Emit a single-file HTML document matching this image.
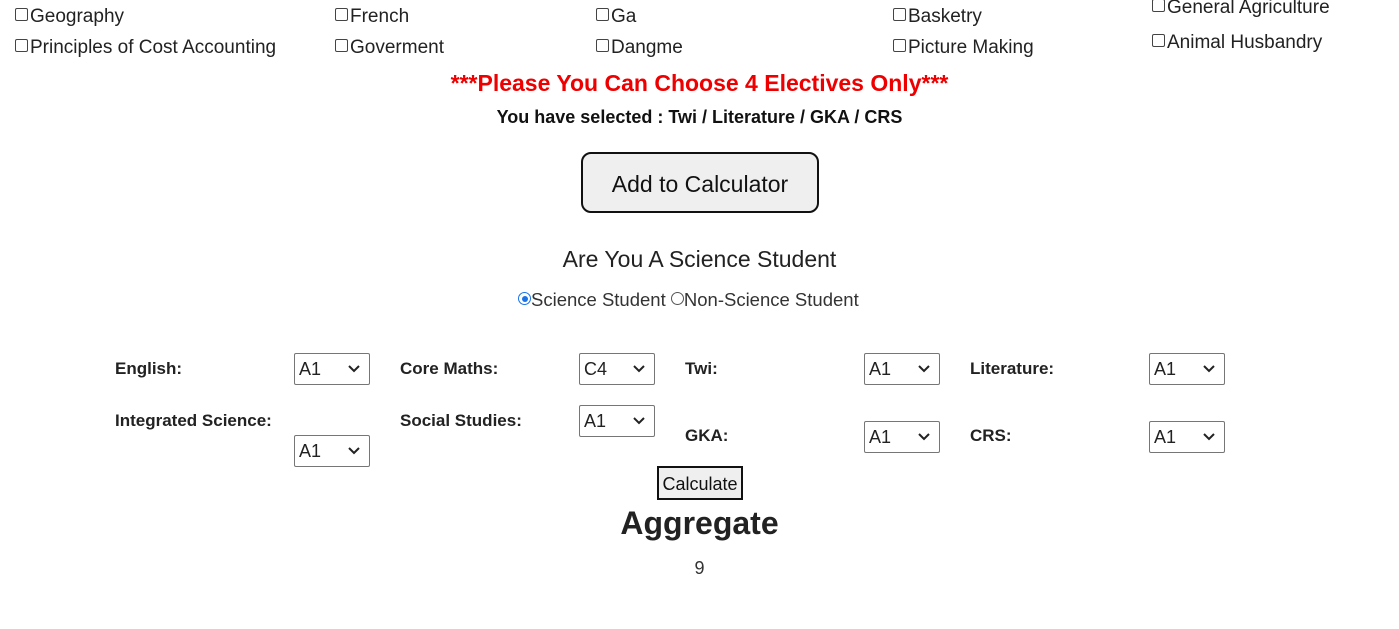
<!DOCTYPE html>
<html><head><meta charset="utf-8"><style>
body{margin:0;width:1399px;height:629px;background:#fff;font-family:"Liberation Sans",sans-serif;color:#222;position:relative;overflow:hidden}
.a{position:absolute;white-space:nowrap}
.cb{font-size:19px;line-height:20px}
.cb i{display:inline-block;width:13px;height:13px;border:1px solid #444;border-radius:2px;margin-right:2px;vertical-align:1px;box-sizing:border-box}
.lb{font-size:17px;font-weight:bold;color:#222}
.sel{position:absolute;width:76px;height:32px;border:1px solid #767676;border-radius:2px;box-sizing:border-box;font-size:18px;line-height:30px;padding-left:4px;background:#fff}
.sel svg{position:absolute;right:9px;top:11px}
</style></head><body>
<div class="a cb" style="left:15px;top:7px"><i></i>Geography</div>
<div class="a cb" style="left:15px;top:38px"><i></i>Principles of Cost Accounting</div>
<div class="a cb" style="left:335px;top:7px"><i></i>French</div>
<div class="a cb" style="left:335px;top:38px"><i></i>Goverment</div>
<div class="a cb" style="left:596px;top:7px"><i></i>Ga</div>
<div class="a cb" style="left:596px;top:38px"><i></i>Dangme</div>
<div class="a cb" style="left:893px;top:7px"><i></i>Basketry</div>
<div class="a cb" style="left:893px;top:38px"><i></i>Picture Making</div>
<div class="a cb" style="left:1152px;top:-2px"><i></i>General Agriculture</div>
<div class="a cb" style="left:1152px;top:33px"><i></i>Animal Husbandry</div>

<div class="a" style="left:0;width:1399px;text-align:center;top:70px;font-size:23px;font-weight:bold;color:#e00">***Please You Can Choose 4 Electives Only***</div>
<div class="a" style="left:0;width:1399px;text-align:center;top:107px;font-size:18px;font-weight:bold;color:#111">You have selected : Twi / Literature / GKA / CRS</div>

<div class="a" style="left:581px;top:152px;width:238px;height:61px;border:2px solid #111;border-radius:10px;box-sizing:border-box;background:#efefef;font-size:23px;line-height:60px;text-align:center;color:#111">Add to Calculator</div>

<div class="a" style="left:0;width:1399px;text-align:center;top:246px;font-size:23px;color:#222">Are You A Science Student</div>
<div class="a" style="left:518px;top:289px;font-size:18.5px;color:#333">
<span style="display:inline-block;width:13px;height:13px;border-radius:50%;border:1px solid #1a73e8;box-sizing:border-box;position:relative;vertical-align:1px"><span style="position:absolute;left:2.5px;top:2.5px;width:6px;height:6px;border-radius:50%;background:#1a73e8"></span></span>Science Student <span style="display:inline-block;width:13px;height:13px;border-radius:50%;border:1px solid #555;box-sizing:border-box;vertical-align:1px"></span>Non-Science Student</div>

<div class="a lb" style="left:115px;top:359px">English:</div>
<div class="a lb" style="left:115px;top:411px">Integrated Science:</div>
<div class="a lb" style="left:400px;top:359px">Core Maths:</div>
<div class="a lb" style="left:400px;top:411px">Social Studies:</div>
<div class="a lb" style="left:685px;top:359px">Twi:</div>
<div class="a lb" style="left:685px;top:426px">GKA:</div>
<div class="a lb" style="left:970px;top:359px">Literature:</div>
<div class="a lb" style="left:970px;top:426px">CRS:</div>

<div class="sel" style="left:294px;top:353px">A1<svg width="12" height="8"><path d="M1 1l5 5 5-5" stroke="#222" stroke-width="2" fill="none"/></svg></div>
<div class="sel" style="left:294px;top:435px">A1<svg width="12" height="8"><path d="M1 1l5 5 5-5" stroke="#222" stroke-width="2" fill="none"/></svg></div>
<div class="sel" style="left:579px;top:353px">C4<svg width="12" height="8"><path d="M1 1l5 5 5-5" stroke="#222" stroke-width="2" fill="none"/></svg></div>
<div class="sel" style="left:579px;top:405px">A1<svg width="12" height="8"><path d="M1 1l5 5 5-5" stroke="#222" stroke-width="2" fill="none"/></svg></div>
<div class="sel" style="left:864px;top:353px">A1<svg width="12" height="8"><path d="M1 1l5 5 5-5" stroke="#222" stroke-width="2" fill="none"/></svg></div>
<div class="sel" style="left:864px;top:421px">A1<svg width="12" height="8"><path d="M1 1l5 5 5-5" stroke="#222" stroke-width="2" fill="none"/></svg></div>
<div class="sel" style="left:1149px;top:353px">A1<svg width="12" height="8"><path d="M1 1l5 5 5-5" stroke="#222" stroke-width="2" fill="none"/></svg></div>
<div class="sel" style="left:1149px;top:421px">A1<svg width="12" height="8"><path d="M1 1l5 5 5-5" stroke="#222" stroke-width="2" fill="none"/></svg></div>

<div class="a" style="left:657px;top:466px;width:86px;height:34px;border:2px solid #111;box-sizing:border-box;background:#efefef;font-size:18px;line-height:32px;text-align:center;color:#111">Calculate</div>
<div class="a" style="left:0;width:1399px;text-align:center;top:505px;font-size:32px;font-weight:bold;color:#222">Aggregate</div>
<div class="a" style="left:0;width:1399px;text-align:center;top:558px;font-size:18px;color:#333">9</div>
</body></html>
